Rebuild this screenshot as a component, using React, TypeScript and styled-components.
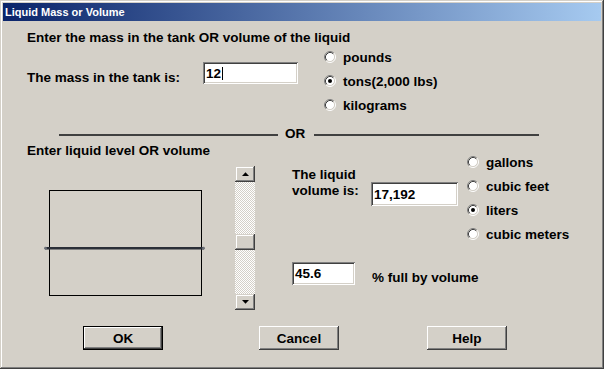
import React from "react";
import styled, { createGlobalStyle } from "styled-components";

const GlobalStyle = createGlobalStyle`
  html, body { margin: 0; padding: 0; background: #d4d0c8; }
  body { width: 604px; height: 369px; overflow: hidden; }
`;

const Window = styled.div`
  width: 604px;
  height: 369px;
  box-sizing: border-box;
  padding: 3px;
  background: #d4d0c8;
  box-shadow: inset -1px -1px #404040, inset 1px 1px #d4d0c8,
    inset -2px -2px #808080, inset 2px 2px #ffffff;
  display: flex;
  flex-direction: column;
`;

const TitleBar = styled.div`
  height: 18px;
  flex: none;
  display: flex;
  align-items: center;
  padding-left: 2px;
  background: linear-gradient(to right, #0a246a, #a6caf0);
  color: #ffffff;
  font-family: "Liberation Sans", Arial, sans-serif;
  font-weight: bold;
  font-size: 11px;
`;

const Body = styled.div`
  flex: 1;
  padding: 9px 0 0 24px;
  font-family: "Liberation Sans", Arial, sans-serif;
  font-weight: bold;
  font-size: 13.5px;
  color: #000;
`;

const Heading = styled.div`
  line-height: 15px;
  height: 15px;
  white-space: nowrap;
`;

const MassRow = styled.div`
  display: flex;
  align-items: flex-start;
  height: 72px;
`;

const MassLabel = styled.div`
  width: 176px;
  margin-top: 25px;
  line-height: 15px;
  white-space: nowrap;
`;

const Field = styled.div<{ $w: number; $h: number; $mt?: number }>`
  width: ${(p) => p.$w}px;
  height: ${(p) => p.$h}px;
  margin-top: ${(p) => p.$mt ?? 0}px;
  flex: none;
  box-sizing: border-box;
  padding-left: 3px;
  display: flex;
  align-items: center;
  background: #ffffff;
  box-shadow: inset 1px 1px #808080, inset -1px -1px #ffffff,
    inset 2px 2px #404040, inset -2px -2px #d4d0c8;
  white-space: nowrap;
`;

const Caret = styled.span`
  display: inline-block;
  width: 1px;
  height: 13px;
  background: #000;
  margin-left: 1px;
`;

const RadioGroup = styled.div<{ $ml: number; $mt?: number }>`
  display: flex;
  flex-direction: column;
  margin-left: ${(p) => p.$ml}px;
  margin-top: ${(p) => p.$mt ?? 0}px;
`;

const RadioItem = styled.div`
  height: 24px;
  display: flex;
  align-items: center;
  gap: 7px;
  white-space: nowrap;
`;

const Divider = styled.div`
  margin-left: 32px;
  margin-top: 10px;
  width: 480px;
  height: 16px;
  display: flex;
  align-items: flex-start;
`;

const Rule = styled.div<{ $w?: number }>`
  height: 2px;
  margin-top: 7px;
  background: #404040;
  ${(p) => (p.$w ? `width: ${p.$w}px; flex: none;` : `flex: 1;`)}
`;

const OrText = styled.span`
  line-height: 15px;
  margin: -1px 9px 0 7px;
`;

const LowerSection = styled.div`
  display: flex;
  align-items: flex-start;
`;

const LeftCol = styled.div`
  width: 265px;
  flex: none;
`;

const TankRow = styled.div`
  display: flex;
  margin-top: 8px;
`;

const TankSvg = styled.svg`
  margin-left: 13px;
  flex: none;
`;

const Scrollbar = styled.div`
  margin-left: 25px;
  width: 20px;
  height: 144px;
  display: flex;
  flex-direction: column;
`;

const raised = `
  background: #d4d0c8;
  box-shadow: inset -1px -1px #404040, inset 1px 1px #d4d0c8,
    inset -2px -2px #808080, inset 2px 2px #ffffff;
`;

const ScrollButton = styled.div`
  height: 16px;
  flex: none;
  display: flex;
  align-items: center;
  justify-content: center;
  ${raised}
`;

const Track = styled.div<{ $h?: number }>`
  ${(p) => (p.$h ? `height: ${p.$h}px; flex: none;` : `flex: 1;`)}
  background: repeating-conic-gradient(#d4d0c8 0 25%, #ffffff 0 50%) 0 0 / 2px 2px;
`;

const Thumb = styled.div`
  height: 16px;
  flex: none;
  ${raised}
`;

const VolumeCol = styled.div`
  width: 166px;
  flex: none;
  display: flex;
  flex-direction: column;
`;

const VolumeRow = styled.div`
  display: flex;
  align-items: flex-start;
  margin-top: 24px;
`;

const VolumeLabel = styled.div`
  width: 79px;
  flex: none;
  line-height: 16px;
`;

const PercentRow = styled.div`
  display: flex;
  align-items: flex-start;
  margin-top: 56px;
`;

const PercentText = styled.span`
  margin-left: 17px;
  margin-top: 8px;
  line-height: 15px;
  white-space: nowrap;
`;

const ButtonRow = styled.div`
  display: flex;
  margin-top: 16px;
  padding-left: 56px;
`;

const Button = styled.button<{ $ml?: number; $default?: boolean }>`
  width: 80px;
  height: 24px;
  margin-left: ${(p) => p.$ml ?? 0}px;
  padding: 0;
  border: none;
  font: inherit;
  color: #000;
  background: #d4d0c8;
  box-shadow: ${(p) =>
    p.$default
      ? "inset 0 0 0 1px #000000, inset -2px -2px #404040, inset 2px 2px #ffffff, inset -3px -3px #808080"
      : "inset -1px -1px #404040, inset 1px 1px #ffffff, inset -2px -2px #808080, inset 2px 2px #d4d0c8"};
`;

const RadioMark = ({ checked }: { checked?: boolean }) => (
  <svg width="12" height="12" viewBox="0 0 12 12" style={{ flex: "none" }}>
    <circle cx="6" cy="6" r="4.5" fill="#ffffff" />
    <path d="M2.11 9.89 A5.5 5.5 0 0 1 9.89 2.11" stroke="#808080" fill="none" />
    <path d="M9.89 2.11 A5.5 5.5 0 0 1 2.11 9.89" stroke="#ffffff" fill="none" />
    <path d="M2.82 9.18 A4.5 4.5 0 0 1 9.18 2.82" stroke="#404040" fill="none" />
    <path d="M9.18 2.82 A4.5 4.5 0 0 1 2.82 9.18" stroke="#d4d0c8" fill="none" />
    {checked && <circle cx="6" cy="6" r="2" fill="#000000" />}
  </svg>
);

const Radio = ({ label, checked }: { label: string; checked?: boolean }) => (
  <RadioItem>
    <RadioMark checked={checked} />
    <span>{label}</span>
  </RadioItem>
);

const Arrow = ({ up }: { up?: boolean }) => (
  <svg width="7" height="4" viewBox="0 0 7 4">
    <polygon points={up ? "0,4 7,4 3.5,0.3" : "0,0 7,0 3.5,3.7"} fill="#000" />
  </svg>
);

export default function App() {
  return (
    <>
      <GlobalStyle />
      <Window>
        <TitleBar>Liquid Mass or Volume</TitleBar>
        <Body>
          <Heading>Enter the mass in the tank OR volume of the liquid</Heading>
          <MassRow>
            <MassLabel>The mass in the tank is:</MassLabel>
            <Field $w={95} $h={22} $mt={17}>
              12
              <Caret />
            </Field>
            <RadioGroup $ml={26}>
              <Radio label="pounds" />
              <Radio label="tons(2,000 lbs)" checked />
              <Radio label="kilograms" />
            </RadioGroup>
          </MassRow>
          <Divider>
            <Rule $w={219} />
            <OrText>OR</OrText>
            <Rule />
          </Divider>
          <LowerSection>
            <LeftCol>
              <Heading>Enter liquid level OR volume</Heading>
              <TankRow>
                <TankSvg width="170" height="144" viewBox="0 0 170 144">
                  <rect x="9.5" y="24.5" width="152" height="105" fill="none" stroke="#000" />
                  <rect x="5" y="81" width="159" height="2.5" fill="#2b2f38" />
                  <circle cx="5.5" cy="82.2" r="1.4" fill="#6a6e76" />
                  <circle cx="163.5" cy="82.2" r="1.4" fill="#6a6e76" />
                </TankSvg>
                <Scrollbar>
                  <ScrollButton>
                    <Arrow up />
                  </ScrollButton>
                  <Track $h={52} />
                  <Thumb />
                  <Track />
                  <ScrollButton>
                    <Arrow />
                  </ScrollButton>
                </Scrollbar>
              </TankRow>
            </LeftCol>
            <VolumeCol>
              <VolumeRow>
                <VolumeLabel>
                  The liquid
                  <br />
                  volume is:
                </VolumeLabel>
                <Field $w={87} $h={24} $mt={15}>
                  17,192
                </Field>
              </VolumeRow>
              <PercentRow>
                <Field $w={63} $h={23}>
                  45.6
                </Field>
                <PercentText>% full by volume</PercentText>
              </PercentRow>
            </VolumeCol>
            <RadioGroup $ml={9} $mt={7}>
              <Radio label="gallons" />
              <Radio label="cubic feet" />
              <Radio label="liters" checked />
              <Radio label="cubic meters" />
            </RadioGroup>
          </LowerSection>
          <ButtonRow>
            <Button $default>OK</Button>
            <Button $ml={96}>Cancel</Button>
            <Button $ml={88}>Help</Button>
          </ButtonRow>
        </Body>
      </Window>
    </>
  );
}
